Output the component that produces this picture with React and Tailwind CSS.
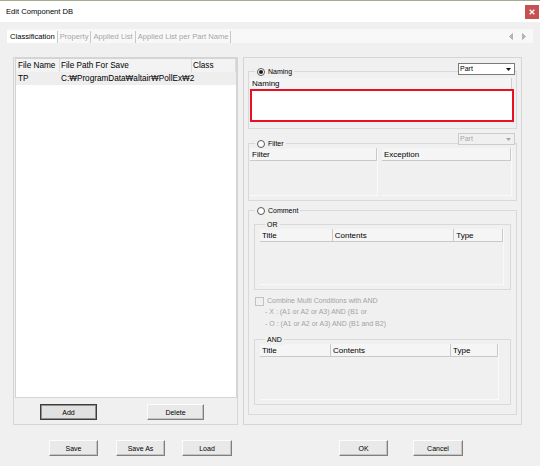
function Radio({ checked }) {
  return (
    <span className="w-[8px] h-[8px] rounded-full border border-[#5a5a5a] bg-white flex items-center justify-center shrink-0">
      {checked && <span className="w-[4px] h-[4px] rounded-full bg-[#1a1a1a]" />}
    </span>
  );
}

function Legend({ radio, checked, label, className = "" }) {
  return (
    <div className={"absolute -top-[6px] h-[11px] px-[2px] bg-[#f0f0f0] flex items-center gap-[3px] text-[7px] leading-[11px] " + className}>
      {radio && <Radio checked={checked} />}
      <span>{label}</span>
    </div>
  );
}

function Combo({ disabled, className = "" }) {
  return (
    <div
      className={
        "absolute right-[1px] w-[57px] h-[12px] border flex items-center justify-between text-[7px] leading-[10px] " +
        (disabled ? "bg-[#f0f0f0] border-[#cccccc] text-[#a6a6a6] " : "bg-white border-[#7a7a7a] text-black ") +
        className
      }
    >
      <span className="pl-[1px]">Part</span>
      <span className="w-[11px] h-full flex items-center justify-center">
        <svg width="5" height="3" viewBox="0 0 5 3">
          <path d="M0 0H5L2.5 3Z" fill={disabled ? "#a6a6a6" : "#111"} />
        </svg>
      </span>
    </div>
  );
}

function Btn({ children, className = "" }) {
  return (
    <div
      className={
        "h-[16px] bg-[#e9e9e9] border border-t-[#fcfcfc] border-l-[#fcfcfc] border-r-[#7f7f7f] border-b-[#7f7f7f] shadow-[inset_-1px_-1px_0_#c4c4c4] flex items-center justify-center text-[7px] leading-none text-black " +
        className
      }
    >
      {children}
    </div>
  );
}

function HCell({ className = "", children }) {
  return (
    <div className={"h-[13px] bg-[#f5f5f5] border-r border-b border-[#c9c9c9] pl-[2px] text-[8px] leading-[13px] text-black overflow-hidden whitespace-nowrap " + className}>
      {children}
    </div>
  );
}

export default function App() {
  return (
    <div className="w-[540px] h-[466px] bg-[#f0f0f0] flex flex-col overflow-hidden font-['Liberation_Sans',Arial,sans-serif] text-black">
      {/* title bar */}
      <div className="h-[22px] shrink-0 bg-white border-t border-[#a4ac8c] flex items-center justify-between pl-[6px] pr-[1px]">
        <span className="text-[7.6px] leading-none">Edit Component DB</span>
        <div className="w-[14px] h-[14px] bg-[#c75050] flex items-center justify-center">
          <svg width="6" height="6" viewBox="0 0 6 6">
            <path d="M0.7 0.7L5.3 5.3M5.3 0.7L0.7 5.3" stroke="white" strokeWidth="1.3" />
          </svg>
        </div>
      </div>

      {/* tab strip */}
      <div className="mt-[7px] mx-[7px] h-[14px] shrink-0 bg-[#f8f8f8] flex items-end justify-between">
        <div className="flex items-end h-[12px] text-[7.6px] leading-[12px]">
          <span className="bg-white pl-[3px] pr-[2px] h-[12px]">Classification</span>
          <span className="border-l border-[#c8c8c8] px-[2px] h-[12px] text-[#a6a6a6]">Property</span>
          <span className="border-l border-[#c8c8c8] px-[2px] h-[12px] text-[#a6a6a6]">Applied List</span>
          <span className="border-l border-r border-[#c8c8c8] px-[2px] h-[12px] text-[#a6a6a6]">Applied List per Part Name</span>
        </div>
        <div className="flex items-center gap-[9px] h-[14px] pr-[7px]">
          <svg width="4" height="7" viewBox="0 0 4 7">
            <path d="M3.5 0.5V6.5L0.5 3.5Z" fill="#b8b8b8" stroke="#9a9a9a" strokeWidth="0.6" />
          </svg>
          <svg width="4" height="7" viewBox="0 0 4 7">
            <path d="M0.5 0.5V6.5L3.5 3.5Z" fill="#b8b8b8" stroke="#9a9a9a" strokeWidth="0.6" />
          </svg>
        </div>
      </div>

      {/* main panels */}
      <div className="mt-[14px] flex pl-[13px] gap-[5px] shrink-0">
        {/* left panel */}
        <div className="w-[225px] h-[368px] border border-[#d5d5d5] flex flex-col">
          <div className="ml-[1px] w-[222px] h-[340px] border border-[#d4d4d4] bg-white flex flex-col">
            <div className="flex h-[13px]">
              <div className="w-[44px] bg-[#f3f3f3] border-r border-[#dcdcdc] pl-[2px] text-[8.2px] leading-[13px]">File Name</div>
              <div className="w-[132px] bg-[#f3f3f3] border-r border-[#dcdcdc] pl-[1px] text-[8.2px] leading-[13px]">File Path For Save</div>
              <div className="flex-1 bg-[#f3f3f3] border-r border-[#dcdcdc] pl-[1px] text-[8.2px] leading-[13px]">Class</div>
            </div>
            <div className="flex h-[13px] bg-[#eeeeee]">
              <div className="w-[44px] pl-[2px] text-[8.2px] leading-[13px]">TP</div>
              <div className="w-[132px] pl-[1px] text-[8.2px] leading-[13px] whitespace-nowrap">C:₩ProgramData₩altair₩PollEx₩2</div>
              <div className="flex-1" />
            </div>
          </div>
          <div className="mt-[6px] ml-[26px] flex gap-[50px]">
            <div className="w-[57px] h-[16px] bg-[#e1e1e1] border border-[#3c3c3c] shadow-[inset_0_0_0_1px_#8f8f8f] flex items-center justify-center text-[7px] leading-none">Add</div>
            <Btn className="w-[57px]">Delete</Btn>
          </div>
        </div>

        {/* right panel */}
        <div className="w-[279px] h-[368px] border border-[#d5d5d5] flex flex-col pl-[4px]">
          {/* Naming */}
          <div className="relative mt-[13px] w-[269px] h-[58px] border border-[#d9d9d9] flex flex-col shrink-0">
            <Legend radio checked label="Naming" className="left-[6px]" />
            <Combo className="-top-[9px]" />
            <div className="ml-[1px] mt-[6px] w-[264px] flex flex-col">
              <div className="h-[11px] flex bg-[#f0f0f0]">
                <div className="w-[262px] bg-[#f4f4f4] border-r border-[#cfcfcf] pl-[2px] text-[8px] leading-[11px]">Naming</div>
              </div>
              <div className="h-[33px] border-2 border-[#e81123] bg-white" />
            </div>
          </div>

          {/* Filter */}
          <div className="relative mt-[14px] w-[269px] h-[58px] border border-[#d9d9d9] flex flex-col shrink-0">
            <Legend radio label="Filter" className="left-[6px]" />
            <Combo disabled className="-top-[11px]" />
            <div className="ml-[1px] mt-[4px] flex gap-[4px]">
              <div className="w-[128px] h-[48px] flex flex-col border-r border-b border-[#fafafa]">
                <HCell className="w-full">Filter</HCell>
              </div>
              <div className="w-[130px] h-[48px] flex flex-col border-r border-b border-[#fafafa]">
                <HCell className="w-full">Exception</HCell>
              </div>
            </div>
          </div>

          {/* Comment */}
          <div className="relative mt-[9px] w-[269px] h-[205px] border border-[#d9d9d9] flex flex-col shrink-0">
            <Legend radio label="Comment" className="left-[6px]" />

            {/* OR */}
            <div className="relative ml-[5px] mt-[13px] w-[257px] h-[66px] border border-[#d9d9d9] shrink-0">
              <Legend label="OR" className="left-[10px]" />
              <div className="ml-[5px] mt-[4px] w-[244px] h-[56px] flex flex-col border-r border-b border-[#fafafa]">
                <div className="flex">
                  <HCell className="w-[73px]">Title</HCell>
                  <HCell className="w-[122px]">Contents</HCell>
                  <HCell className="w-[49px]">Type</HCell>
                </div>
              </div>
            </div>

            {/* checkbox */}
            <div className="ml-[6px] mt-[6px] flex items-center gap-[3px] h-[10px] text-[7px] leading-[10px] text-[#a3a3a3]">
              <span className="w-[9px] h-[9px] border border-[#c2c2c2] bg-[#f0f0f0] shrink-0" />
              <span>Combine Multi Conditions with AND</span>
            </div>
            <div className="ml-[16px] text-[7px] leading-[12px] text-[#a3a3a3] flex flex-col">
              <span>- X : (A1 or A2 or A3) AND (B1 or</span>
              <span>- O : (A1 or A2 or A3) AND (B1 and B2)</span>
            </div>

            {/* AND */}
            <div className="relative ml-[5px] mt-[9px] w-[257px] h-[66px] border border-[#d9d9d9] shrink-0">
              <Legend label="AND" className="left-[10px]" />
              <div className="ml-[5px] mt-[4px] w-[239px] h-[56px] flex flex-col border-r border-b border-[#fafafa]">
                <div className="flex">
                  <HCell className="w-[71px]">Title</HCell>
                  <HCell className="w-[120px]">Contents</HCell>
                  <HCell className="w-[47px]">Type</HCell>
                </div>
              </div>
            </div>
          </div>
        </div>
      </div>

      {/* bottom buttons */}
      <div className="mt-[15px] flex pl-[49px] shrink-0">
        <Btn className="w-[49px]">Save</Btn>
        <Btn className="w-[49px] ml-[18px]">Save As</Btn>
        <Btn className="w-[50px] ml-[17px]">Load</Btn>
        <Btn className="w-[49px] ml-[107px]">OK</Btn>
        <Btn className="w-[50px] ml-[25px]">Cancel</Btn>
      </div>
    </div>
  );
}
